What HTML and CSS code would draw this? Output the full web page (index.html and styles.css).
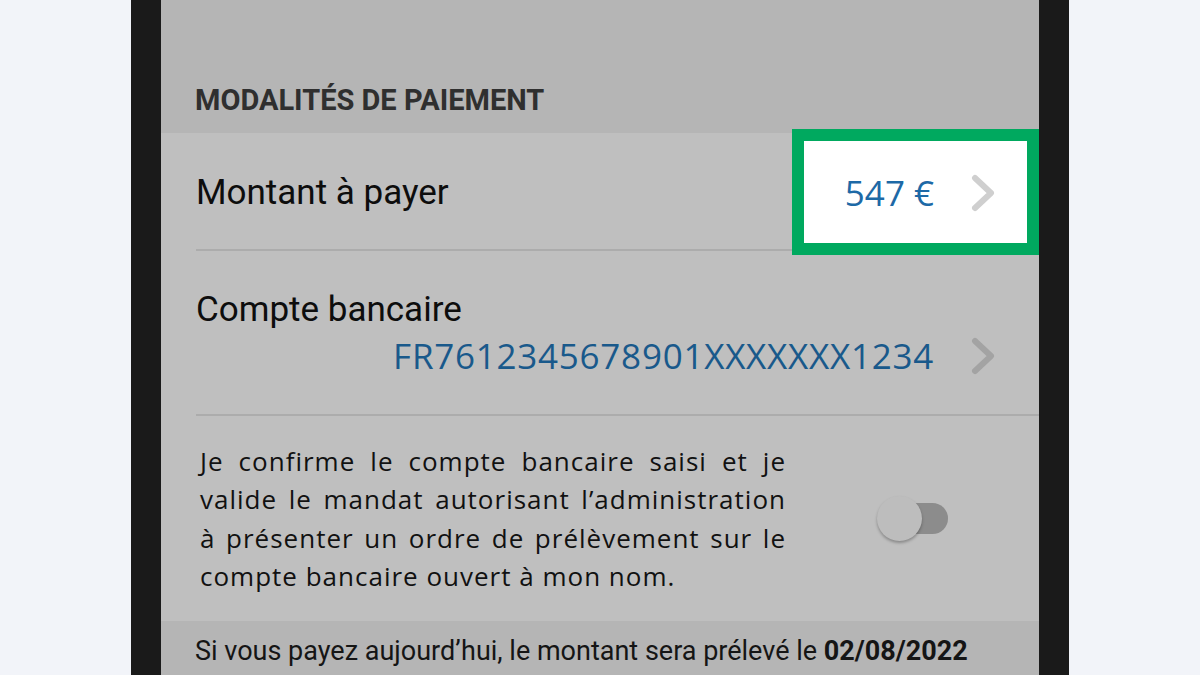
FILE: index.html
```html
<!DOCTYPE html>
<html lang="fr">
<head>
<meta charset="utf-8">
<title>Modalités de paiement</title>
<link rel="stylesheet" href="styles.css">
</head>
<body>
<div class="device">
  <div class="screen">
    <div class="section-head">MODALITÉS DE PAIEMENT</div>

    <div class="row row-amount">
      <div class="row-inner">
        <span class="label">Montant à payer</span>
        <div class="value-wrap">
          <div class="highlight"></div>
          <span class="value">547 €</span>
          <svg class="chev chev-light" viewBox="0 0 24 38" width="24" height="38"><path d="M4 4 L20 19 L4 34"/></svg>
        </div>
      </div>
    </div>

    <div class="row row-account">
      <div class="row-inner col">
        <span class="label">Compte bancaire</span>
        <div class="iban-line">
          <span class="value iban">FR7612345678901XXXXXXX1234</span>
          <svg class="chev" viewBox="0 0 24 38" width="24" height="38"><path d="M4 4 L20 19 L4 34"/></svg>
        </div>
      </div>
    </div>

    <div class="row row-confirm">
      <p class="mandate">Je confirme le compte bancaire saisi et je valide le mandat autorisant l’administration à présenter un ordre de prélèvement sur le compte bancaire ouvert à mon nom.</p>
      <div class="toggle">
        <div class="track"></div>
        <div class="thumb"></div>
      </div>
    </div>

    <div class="footer-note">Si vous payez aujourd’hui, le montant sera prélevé le <b>02/08/2022</b></div>
  </div>
</div>
</body>
</html>
```

FILE: styles.css
```css
html, body {
  margin: 0;
  padding: 0;
}
body {
  background: #f2f4f9;
  width: 1200px;
  height: 675px;
  overflow: hidden;
}
.device {
  width: 938px;
  height: 675px;
  margin: 0 auto;
  padding: 0 30px;
  box-sizing: border-box;
  background: #1a1a1a;
}
.screen {
  height: 100%;
  background: #bfbfbf;
  display: flex;
  flex-direction: column;
}
.section-head {
  background: #b5b5b5;
  padding: 83px 0 16px 34px;
  font-family: Roboto, "Liberation Sans", sans-serif;
  font-weight: 700;
  font-size: 29px;
  line-height: 34px;
  color: #2f2f2f;
}
.row {
  padding-left: 35px;
  background: #bfbfbf;
}
.row-inner {
  border-bottom: 2px solid #acacac;
  padding-right: 44px;
  display: flex;
  align-items: center;
  justify-content: space-between;
}
.row-amount .row-inner {
  height: 112px;
  padding-top: 4px;
}
.label {
  font-family: Roboto, "Liberation Sans", sans-serif;
  font-size: 35px;
  line-height: 44px;
  color: #0d0d0d;
}
.value-wrap {
  position: relative;
  display: flex;
  align-items: center;
  gap: 37px;
}
.highlight {
  position: absolute;
  right: -44px;
  top: -40px;
  width: 247px;
  height: 126px;
  box-sizing: border-box;
  border: 12px solid #00a95f;
  background: #ffffff;
}
.value {
  position: relative;
  font-family: "Open Sans", "Noto Sans", sans-serif;
  font-size: 35px;
  line-height: 48px;
  color: #1d69a6;
}
.iban {
  color: #19598b;
  letter-spacing: 0.75px;
}
.chev {
  position: relative;
  display: block;
  fill: none;
  stroke: #a3a3a3;
  stroke-width: 6;
  stroke-linecap: round;
  stroke-linejoin: round;
}
.chev-light {
  stroke: #cfcfcf;
}
.row-account .row-inner {
  flex-direction: column;
  align-items: stretch;
  padding-top: 37px;
  padding-bottom: 34px;
}
.iban-line {
  display: flex;
  justify-content: flex-end;
  align-items: center;
  gap: 37px;
}
.row-confirm {
  padding-left: 39px;
  padding-right: 91px;
  height: 205px;
  display: flex;
  align-items: center;
  justify-content: space-between;
}
.mandate {
  margin: 0;
  width: 586px;
  font-family: "Open Sans", "Noto Sans", sans-serif;
  font-size: 26px;
  line-height: 38.5px;
  letter-spacing: 1px;
  text-align: justify;
  color: #111;
}
.toggle {
  position: relative;
  width: 71px;
  height: 45px;
}
.track {
  margin: 7px 0 0 3px;
  width: 68px;
  height: 31px;
  border-radius: 16px;
  background: #8c8c8c;
}
.thumb {
  position: absolute;
  left: 0;
  top: 0;
  width: 45px;
  height: 45px;
  border-radius: 50%;
  background: #bdbdbd;
  box-shadow: 0 2px 3px rgba(0, 0, 0, 0.28);
}
.footer-note {
  flex: 1;
  background: #b5b5b5;
  padding: 14px 0 0 34px;
  font-family: Roboto, "Liberation Sans", sans-serif;
  font-size: 27px;
  line-height: 32px;
  color: #151515;
  white-space: nowrap;
}
.footer-note b {
  font-weight: 700;
}
```
